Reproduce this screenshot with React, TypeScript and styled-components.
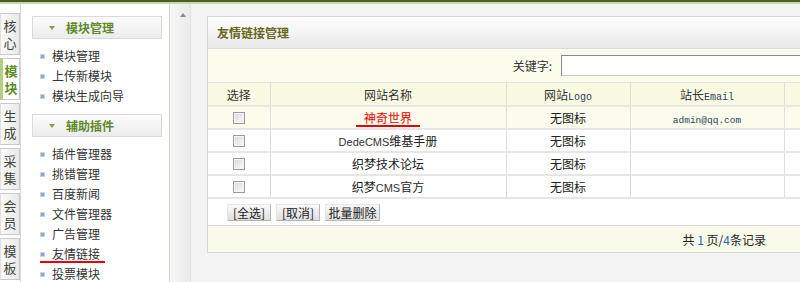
import React from "react";
import styled, { createGlobalStyle } from "styled-components";

const GlobalStyle = createGlobalStyle`
  html, body {
    margin: 0;
    padding: 0;
  }
  body {
    font-family: "Noto Sans CJK SC", "Noto Sans", sans-serif;
    font-size: 12px;
    color: #333;
    background: #fff;
    overflow: hidden;
  }
`;

const Page = styled.div`
  width: 800px;
  height: 282px;
  display: flex;
  flex-direction: column;
  overflow: hidden;
`;

const TopBar = styled.div`
  flex: none;
  height: 2px;
  background: #4d5d2a;
  border-bottom: 2px solid #cad8a4;
`;

const Body = styled.div`
  flex: 1;
  min-height: 0;
  display: flex;
`;

const TabColumn = styled.div`
  flex: none;
  width: 20px;
  padding-top: 9px;
  border-right: 1px solid #d8d8d8;
  display: flex;
  flex-direction: column;
  gap: 3px;
`;

const Tab = styled.div<{ $active?: boolean }>`
  box-sizing: border-box;
  height: 42px;
  display: flex;
  align-items: center;
  justify-content: center;
  font-size: 13px;
  font-weight: ${(p) => (p.$active ? "bold" : "normal")};
  color: ${(p) => (p.$active ? "#5c8a1e" : "#3f4738")};
  background: ${(p) =>
    p.$active ? "#fff" : "linear-gradient(to right, #fafafa, #e9e9e9)"};
  border: 1px solid #c9c9c9;
  border-left: ${(p) => (p.$active ? "3px solid #b2cf7e" : "1px solid #e0e0e0")};
`;

const TabLabel = styled.span`
  display: block;
  width: 13px;
  line-height: 17px;
  text-align: center;
  word-break: break-all;
`;

const Menu = styled.div`
  flex: none;
  width: 137px;
  padding: 12px 0 0 11px;
  border-right: 1px solid #d3d9c4;
  background: #fff;
`;

const MenuHeader = styled.div`
  box-sizing: border-box;
  width: 130px;
  height: 23px;
  display: flex;
  align-items: center;
  padding-left: 16px;
  gap: 11px;
  border: 1px solid #dadada;
  background: linear-gradient(#fcfcfc, #ececec);
  font-weight: bold;
  font-size: 12px;
  color: #5f8a2c;
`;

const Caret = styled.span`
  width: 0;
  height: 0;
  border-left: 3px solid transparent;
  border-right: 3px solid transparent;
  border-top: 4px solid #7ba444;
`;

const MenuList = styled.div`
  margin: 7px 0 8px;
  display: flex;
  flex-direction: column;
`;

const MenuItem = styled.div`
  height: 20px;
  display: flex;
  align-items: center;
  padding-left: 8px;
`;

const ItemInner = styled.span<{ $marked?: boolean }>`
  display: inline-flex;
  align-items: center;
  gap: 7px;
  line-height: 14px;
  padding-right: ${(p) => (p.$marked ? "5px" : "0")};
  border-bottom: 2px solid ${(p) => (p.$marked ? "#e8000b" : "transparent")};
  margin-top: 2px;
`;

const Bullet = styled.span`
  box-sizing: border-box;
  width: 5px;
  height: 5px;
  background: #8aa6d0;
  border: 1px solid #c7d3e6;
`;

const Scroll = styled.div`
  flex: none;
  width: 20px;
  background: linear-gradient(to right, #f6f6f6, #ebebeb);
  border-right: 1px solid #e2e2e2;
  padding-top: 9px;
`;

const ScrollArrow = styled.div`
  margin-left: 10px;
  width: 0;
  height: 0;
  border-left: 3px solid transparent;
  border-right: 3px solid transparent;
  border-bottom: 4px solid #8a8a8a;
`;

const Main = styled.div`
  flex: 1;
  min-width: 0;
  background: #f3f3f3;
  padding: 12px 0 0 16px;
  overflow: hidden;
`;

const Panel = styled.div`
  width: 620px;
  border: 1px solid #d6d6d6;
  background: #fff;
`;

const PanelTitle = styled.div`
  height: 31px;
  display: flex;
  align-items: center;
  padding-left: 9px;
  background: linear-gradient(#ffffff, #e9e9e9);
  border-bottom: 1px solid #dcdcdc;
  font-weight: bold;
  color: #66661c;
`;

const SearchRow = styled.div`
  height: 33px;
  display: flex;
  align-items: center;
  justify-content: flex-end;
  padding-right: 26px;
  gap: 9px;
  background: #fbfcec;
  border-bottom: 1px solid #e2e2e2;
  color: #333;
`;

const SearchInput = styled.input`
  box-sizing: border-box;
  width: 241px;
  height: 21px;
  margin: 0;
  border: 1px solid #c8c8c8;
  border-top-color: #8a8a8a;
  border-left-color: #8a8a8a;
  outline: none;
  background: #fff;
`;

const Table = styled.table`
  width: 100%;
  border-collapse: collapse;
  table-layout: fixed;
`;

const Row = styled.tr<{ $tone?: "head" | "hot" | "plain" }>`
  height: 23px;
  background: ${(p) =>
    p.$tone === "head" ? "#f9f9e4" : p.$tone === "hot" ? "#fbfcec" : "#fff"};
  border-bottom: 2px solid #e6e6e6;
`;

const Cell = styled.td`
  padding: 0;
  text-align: center;
  border-left: 1px solid #dedede;
  color: #222;
  &:first-child {
    border-left: none;
  }
`;

const HeadCell = styled(Cell).attrs({ as: "th" })`
  font-weight: normal;
  color: #333;
`;

const Mono = styled.span<{ $size?: number }>`
  font-family: "Liberation Mono", monospace;
  font-size: ${(p) => p.$size || 9.5}px;
  color: #2f3f5a;
`;

const Latin = styled.span`
  font-family: "Liberation Sans", Arial, sans-serif;
  font-size: 11px;
  color: #333;
`;

const HotLink = styled.span`
  display: inline-block;
  padding: 0 8px;
  line-height: 14px;
  margin-top: 2px;
  color: #f10000;
  border-bottom: 2px solid #e8000b;
`;

const Check = styled.input.attrs({ type: "checkbox" })`
  appearance: none;
  box-sizing: border-box;
  width: 12px;
  height: 12px;
  margin: 3px 0 0 1px;
  border: 1px solid #9b9b9b;
  background: linear-gradient(135deg, #d9d9d9, #fbfbfb);
  box-shadow: inset 0 0 0 1px #f4f4f4;
`;

const ActionRow = styled.div`
  height: 26px;
  display: flex;
  align-items: center;
  gap: 5px;
  padding-left: 19px;
  border-bottom: 1px solid #dcdcdc;
`;

const Button = styled.button<{ $w: number }>`
  box-sizing: border-box;
  width: ${(p) => p.$w}px;
  height: 17px;
  padding: 0;
  margin: 0;
  font-family: "Noto Sans CJK SC", "Noto Sans", sans-serif;
  font-size: 12px;
  line-height: 15px;
  color: #222;
  background: linear-gradient(#fafafa, #dedede);
  border: 1px solid #b5b5b5;
  border-top-color: #e6e6e6;
  border-left-color: #e6e6e6;
`;

const Footer = styled.div`
  height: 26px;
  display: flex;
  align-items: center;
  justify-content: flex-end;
  padding-right: 62px;
  background: #f9faea;
  color: #222;
  white-space: pre;
`;

const Num = styled.span`
  color: #2a5fb0;
`;

const tabs = ["核心", "模块", "生成", "采集", "会员", "模板"];
const moduleItems = ["模块管理", "上传新模块", "模块生成向导"];
const pluginItems = [
  "插件管理器",
  "挑错管理",
  "百度新闻",
  "文件管理器",
  "广告管理",
  "友情链接",
  "投票模块",
];

const links: { name: React.ReactNode; email?: string; hot?: boolean }[] = [
  { name: <HotLink>神奇世界</HotLink>, email: "admin@qq.com", hot: true },
  { name: <><Latin>DedeCMS</Latin>维基手册</> },
  { name: "织梦技术论坛" },
  { name: <>织梦<Latin>CMS</Latin>官方</> },
];

export default function App() {
  return (
    <Page>
      <GlobalStyle />
      <TopBar />
      <Body>
        <TabColumn>
          {tabs.map((t) => (
            <Tab key={t} $active={t === "模块"}>
              <TabLabel>{t}</TabLabel>
            </Tab>
          ))}
        </TabColumn>
        <Menu>
          <MenuHeader>
            <Caret />
            模块管理
          </MenuHeader>
          <MenuList>
            {moduleItems.map((m) => (
              <MenuItem key={m}>
                <ItemInner>
                  <Bullet />
                  {m}
                </ItemInner>
              </MenuItem>
            ))}
          </MenuList>
          <MenuHeader>
            <Caret />
            辅助插件
          </MenuHeader>
          <MenuList>
            {pluginItems.map((m) => (
              <MenuItem key={m}>
                <ItemInner $marked={m === "友情链接"}>
                  <Bullet />
                  {m}
                </ItemInner>
              </MenuItem>
            ))}
          </MenuList>
        </Menu>
        <Scroll>
          <ScrollArrow />
        </Scroll>
        <Main>
          <Panel>
            <PanelTitle>友情链接管理</PanelTitle>
            <SearchRow>
              <span>关键字:</span>
              <SearchInput type="text" />
            </SearchRow>
            <Table>
              <colgroup>
                <col style={{ width: 62 }} />
                <col style={{ width: 236 }} />
                <col style={{ width: 124 }} />
                <col style={{ width: 154 }} />
                <col />
              </colgroup>
              <tbody>
                <Row $tone="head">
                  <HeadCell>选择</HeadCell>
                  <HeadCell>网站名称</HeadCell>
                  <HeadCell>
                    网站<Mono $size={10}>Logo</Mono>
                  </HeadCell>
                  <HeadCell>
                    站长<Mono $size={10}>Email</Mono>
                  </HeadCell>
                  <HeadCell />
                </Row>
                {links.map((l, i) => (
                  <Row key={i} $tone={l.hot ? "hot" : "plain"}>
                    <Cell>
                      <Check />
                    </Cell>
                    <Cell>{l.name}</Cell>
                    <Cell>无图标</Cell>
                    <Cell>{l.email && <Mono>{l.email}</Mono>}</Cell>
                    <Cell />
                  </Row>
                ))}
              </tbody>
            </Table>
            <ActionRow>
              <Button $w={44}>[全选]</Button>
              <Button $w={44}>[取消]</Button>
              <Button $w={55}>批量删除</Button>
            </ActionRow>
            <Footer>
              共 <Num>1</Num> 页/<Num>4</Num>条记录
            </Footer>
          </Panel>
        </Main>
      </Body>
    </Page>
  );
}
